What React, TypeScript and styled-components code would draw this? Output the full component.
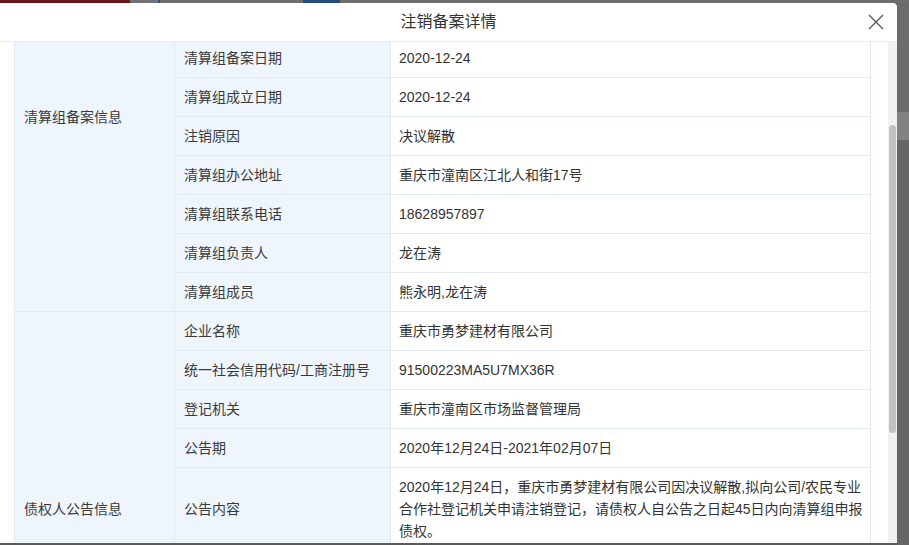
import React, { useLayoutEffect, useRef, useState } from 'react';
import styled, { createGlobalStyle } from 'styled-components';

const GlobalStyle = createGlobalStyle`
  html, body {
    margin: 0;
    padding: 0;
  }
  body {
    font-family: "Liberation Sans", "Noto Sans CJK SC", sans-serif;
    color: #333;
  }
  * {
    box-sizing: border-box;
  }
`;

// the page behind the dialog, dimmed by the mask
const Page = styled.div`
  height: 545px;
  padding-top: 3px;
  display: flex;
  flex-direction: column;
  overflow: hidden;
  background:
    linear-gradient(to right, #6b1616 0 130px, #727272 130px 158px, #2c5183 158px 160px, #6e6e6e 160px 303px, #254a80 303px 340px, #6e6e6e 340px) top left / 100% 3px no-repeat,
    linear-gradient(to bottom, #6c6c6c 0 112px, #838383 112px 140px, #666 140px) right top / 12px 100% no-repeat,
    #5a5a5a;
`;

const Modal = styled.div`
  width: 897px;
  height: 540px;
  background: #fff;
  border-radius: 0 4px 0 0;
  display: flex;
  flex-direction: column;
  overflow: hidden;
`;

const Header = styled.div`
  height: 39px;
  flex-shrink: 0;
  border-bottom: 1px solid #ebebeb;
  display: grid;
  grid-template-columns: 1fr auto 1fr;
  align-items: center;
`;

const Title = styled.h2`
  grid-column: 2;
  margin: 0;
  font-size: 16px;
  font-weight: normal;
  color: #333;
  line-height: 22px;
`;

const CloseButton = styled.button`
  grid-column: 3;
  justify-self: end;
  margin-right: 12px;
  width: 18px;
  height: 18px;
  padding: 0;
  border: 0;
  background: none;
  display: flex;
  align-items: center;
  justify-content: center;
  cursor: pointer;
`;

const Body = styled.div`
  flex: 1;
  min-height: 0;
  display: flex;
`;

const Scroller = styled.div`
  flex: 1;
  overflow-y: auto;
  scrollbar-width: none;
  padding: 14px 17px 14px 14px;

  &::-webkit-scrollbar {
    display: none;
  }
`;

const Track = styled.div`
  width: 9px;
  flex-shrink: 0;
  background: #f1f1f1;
  display: flex;
  justify-content: center;
`;

const Thumb = styled.div`
  width: 7px;
  background: #c1c1c1;
  border-radius: 4px;
`;

const Table = styled.table`
  width: 100%;
  border-collapse: collapse;
  table-layout: fixed;
  font-size: 14px;
`;

const Cell = styled.td<{ $label?: boolean }>`
  border: 1px solid #e2ebf5;
  background: ${p => (p.$label ? '#eef5fd' : '#fff')};
  color: ${p => (p.$label ? '#3a3a3a' : '#333')};
  padding: ${p => (p.$label ? '8px 9px' : '8px 4px 8px 8px')};
  line-height: 22px;
  vertical-align: middle;
  word-break: break-all;
`;

interface Row {
  label: string;
  value: string;
}

interface Group {
  title: string;
  rows: Row[];
}

const groups: Group[] = [
  {
    title: '清算组备案信息',
    rows: [
      { label: '企业名称', value: '重庆市勇梦建材有限公司' },
      { label: '统一社会信用代码/注册号', value: '91500223MA5U7MX36R' },
      { label: '登记机关', value: '重庆市潼南区市场监督管理局' },
      { label: '清算组备案日期', value: '2020-12-24' },
      { label: '清算组成立日期', value: '2020-12-24' },
      { label: '注销原因', value: '决议解散' },
      { label: '清算组办公地址', value: '重庆市潼南区江北人和街17号' },
      { label: '清算组联系电话', value: '18628957897' },
      { label: '清算组负责人', value: '龙在涛' },
      { label: '清算组成员', value: '熊永明,龙在涛' },
    ],
  },
  {
    title: '债权人公告信息',
    rows: [
      { label: '企业名称', value: '重庆市勇梦建材有限公司' },
      { label: '统一社会信用代码/工商注册号', value: '91500223MA5U7MX36R' },
      { label: '登记机关', value: '重庆市潼南区市场监督管理局' },
      { label: '公告期', value: '2020年12月24日-2021年02月07日' },
      {
        label: '公告内容',
        value:
          '2020年12月24日，重庆市勇梦建材有限公司因决议解散,拟向公司/农民专业合作社登记机关申请注销登记，请债权人自公告之日起45日内向清算组申报债权。',
      },
      { label: '债权申报联系人', value: '龙在涛' },
      { label: '债权申报联系电话', value: '18628957897' },
      { label: '债权申报地址', value: '重庆市潼南区江北人和街17号' },
      { label: '公告状态', value: '正常' },
    ],
  },
];

const CloseIcon = () => (
  <svg width="16" height="16" viewBox="0 0 16 16">
    <path d="M1 1L15 15M15 1L1 15" stroke="#555" strokeWidth="1.3" fill="none" />
  </svg>
);

const App = () => {
  const scrollRef = useRef<HTMLDivElement>(null);
  const [thumb, setThumb] = useState({ top: 0, height: 0 });

  useLayoutEffect(() => {
    const el = scrollRef.current;
    if (!el) return;
    el.scrollTop = 135;
    const update = () => {
      const track = el.clientHeight;
      setThumb({
        top: (el.scrollTop / el.scrollHeight) * track,
        height: (el.clientHeight / el.scrollHeight) * track,
      });
    };
    update();
    el.addEventListener('scroll', update);
    return () => el.removeEventListener('scroll', update);
  }, []);

  return (
    <Page>
      <GlobalStyle />
      <Modal>
        <Header>
          <Title>注销备案详情</Title>
          <CloseButton aria-label="关闭">
            <CloseIcon />
          </CloseButton>
        </Header>
        <Body>
          <Scroller ref={scrollRef}>
            <Table>
              <colgroup>
                <col style={{ width: 160 }} />
                <col style={{ width: 216 }} />
                <col />
              </colgroup>
              <tbody>
                {groups.map(group =>
                  group.rows.map((row, i) => (
                    <tr key={group.title + row.label}>
                      {i === 0 && (
                        <Cell $label rowSpan={group.rows.length}>
                          {group.title}
                        </Cell>
                      )}
                      <Cell $label>{row.label}</Cell>
                      <Cell>{row.value}</Cell>
                    </tr>
                  ))
                )}
              </tbody>
            </Table>
          </Scroller>
          <Track>
            <Thumb style={{ marginTop: thumb.top, height: thumb.height }} />
          </Track>
        </Body>
      </Modal>
    </Page>
  );
};

export default App;
